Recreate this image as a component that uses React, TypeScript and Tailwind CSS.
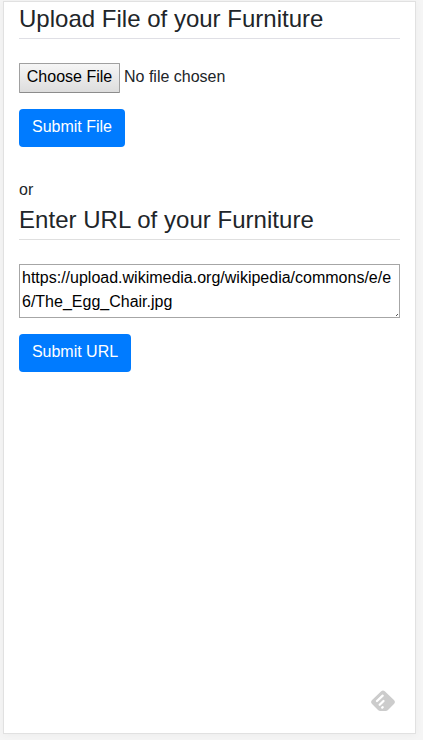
export default function App() {
  return (
    <div className="h-[740px] w-[423px] overflow-hidden bg-[#f5f5f5] pl-[3px] pt-px font-['Liberation_Sans',Arial,sans-serif] text-base leading-6 text-[#212529]">
      <main className="flex h-[733px] w-[413px] flex-col border border-[#e1e1e1] bg-white px-[15px] shadow-[0_1px_8px_rgba(0,0,0,0.04)]">
        <h1 className="h-[37px] border-b border-[#dfdfe5] pt-[3px] text-2xl leading-[28.8px] tracking-[0.01px]">Upload File of your Furniture</h1>
        <div className="mt-[24px] flex h-[30px] items-center gap-1">
          <button className="h-[30px] w-[101px] rounded-[1px] border border-[#a0a0a0] border-b-[#8c8c8c] bg-linear-to-b from-[#f6f6f6] to-[#dddddd] pb-[2px] leading-6 text-black">Choose File</button>
          <span className="pb-[2px]">No file chosen</span>
        </div>
        <button className="mt-4 h-[38px] w-[106px] rounded bg-[#007bff] pb-[2px] text-white">Submit File</button>
        <p className="mt-[31px] h-6">or</p>
        <h2 className="mt-[1px] h-[37px] border-b border-[#dfdfdf] pt-[3px] text-2xl leading-[28.8px] tracking-[0.035px]">Enter URL of your Furniture</h2>
        <div className="relative mt-[24px] h-[54px] w-[381px] shrink-0">
          <textarea className="block h-[54px] w-[381px] resize-none overflow-hidden border border-[#a6a6a6] px-[2px] pb-[2px] pt-px leading-6 text-black" spellCheck={false} defaultValue="https://upload.wikimedia.org/wikipedia/commons/e/e6/The_Egg_Chair.jpg" />
          <svg className="absolute bottom-[2px] right-[2px]" width="2" height="2" viewBox="0 0 2 2" shapeRendering="crispEdges">
            <path d="M0 1H1V2H0ZM1 0H2V1H1Z" fill="#555" />
          </svg>
        </div>
        <button className="mt-4 h-[38px] w-[112px] rounded bg-[#007bff] pb-[2px] text-white">Submit URL</button>
        <svg className="mb-5 mr-1 mt-auto self-end" width="26" height="24" viewBox="0 0 26 24">
          <path d="M11.2 2.2Q13 .6 14.8 2.2L24.2 11.2Q25.8 13 24.2 14.8L18 21Q17 22 15.5 22H10.5Q9 22 8 21L1.8 14.8Q.2 13 1.8 11.2Z" fill="#ccc" />
          <path d="M7 12L12.7 6.7M9.7 15.7L13.5 12M12.2 18.6L12.7 18.2" stroke="white" strokeWidth="2.3" strokeLinecap="round" />
        </svg>
      </main>
    </div>
  );
}
